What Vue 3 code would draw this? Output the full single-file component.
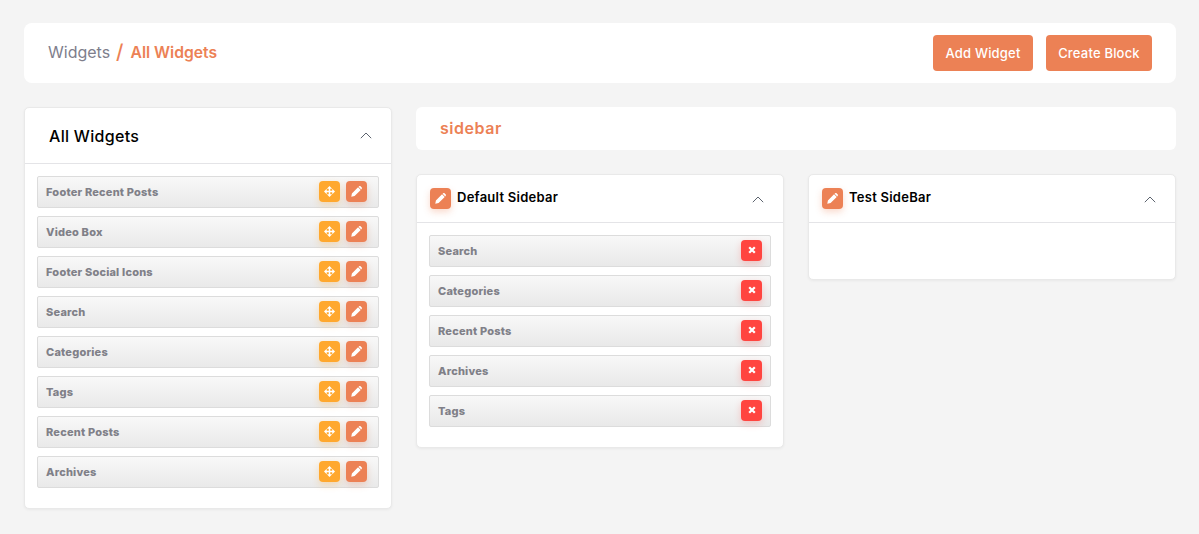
<template>
  <div class="page">
    <header class="top-bar">
      <div class="crumbs">
        <span class="crumb-muted">Widgets</span>
        <span class="crumb-sep">/</span>
        <span class="crumb-active">All Widgets</span>
      </div>
      <div class="top-actions">
        <button class="btn btn-add">Add Widget</button>
        <button class="btn btn-block">Create Block</button>
      </div>
    </header>

    <div class="columns">
      <section class="card all-card">
        <div class="all-head">
          <h2>All Widgets</h2>
          <svg class="chevron" viewBox="0 0 12 7" width="12" height="7"><path d="M.8 6.200 6 1l5.200 5.200" /></svg>
        </div>
        <div class="list all-list">
          <div v-for="name in allWidgets" :key="name" class="row">
            <span class="row-name">{{ name }}</span>
            <span class="icon-btn move">
              <svg viewBox="0 0 12 12" width="11" height="11"><path d="M6 0 8.900 3H6.800V5.200H9V3.100L12 6 9 8.900V6.800H6.800V9H8.900L6 12 3.100 9H5.200V6.800H3V8.900L0 6 3 3.100V5.200H5.200V3H3.100Z" /></svg>
            </span>
            <span class="icon-btn edit">
              <svg viewBox="0 0 12 12" width="11" height="11"><path d="M.3 11.700 1 8.100 7.700 1.400 10.600 4.300 3.900 11ZM8.300.8 8.900.3C9.400-.1 10-.1 10.400.3L11.700 1.600C12.100 2 12.100 2.600 11.700 3.100L11.200 3.700Z" /></svg>
            </span>
          </div>
        </div>
      </section>

      <div class="right">
        <div class="name-bar">sidebar</div>
        <div class="sidebars">
          <section v-for="bar in sidebars" :key="bar.title" class="card">
            <div class="bar-head">
              <span class="icon-btn edit">
                <svg viewBox="0 0 12 12" width="11" height="11"><path d="M.3 11.700 1 8.100 7.700 1.400 10.600 4.300 3.900 11ZM8.300.8 8.900.3C9.400-.1 10-.1 10.400.3L11.700 1.600C12.100 2 12.100 2.600 11.700 3.100L11.200 3.700Z" /></svg>
              </span>
              <h3>{{ bar.title }}</h3>
              <svg class="chevron" viewBox="0 0 12 7" width="12" height="7"><path d="M.8 6.200 6 1l5.200 5.200" /></svg>
            </div>
            <div class="list bar-list">
              <div v-for="item in bar.items" :key="item" class="row">
                <span class="row-name">{{ item }}</span>
                <span class="icon-btn remove">
                  <svg viewBox="0 0 10 10" width="8" height="8"><path d="M1.500 1.500 8.500 8.500M8.500 1.500 1.500 8.500" /></svg>
                </span>
              </div>
            </div>
          </section>
        </div>
      </div>
    </div>
  </div>
</template>

<script setup>
const allWidgets = [
  "Footer Recent Posts",
  "Video Box",
  "Footer Social Icons",
  "Search",
  "Categories",
  "Tags",
  "Recent Posts",
  "Archives",
];

const sidebars = [
  {
    title: "Default Sidebar",
    items: ["Search", "Categories", "Recent Posts", "Archives", "Tags"],
  },
  { title: "Test SideBar", items: [] },
];
</script>

<style>
html,
body {
  margin: 0;
  background: #f4f4f4;
}
</style>

<style scoped>
.page {
  box-sizing: border-box;
  height: 534px;
  overflow: hidden;
  padding: 23px 23px 0 24px;
  background: #f4f4f4;
  font-family: Inter, "Noto Sans", sans-serif;
}

.top-bar {
  display: flex;
  align-items: center;
  justify-content: space-between;
  height: 60px;
  padding: 0 24px;
  background: #fff;
  border-radius: 8px;
}

.crumbs {
  display: flex;
  align-items: center;
  padding-bottom: 2px;
  font-size: 16px;
}
.crumb-muted {
  color: #7e7e8c;
}
.crumb-sep {
  margin: 0 7px 0 6px;
  color: #ec8155;
  font-size: 20px;
  font-weight: 500;
}
.crumb-active {
  color: #ec8155;
  font-size: 15.7px;
  font-weight: 600;
}

.top-actions {
  display: flex;
  gap: 13px;
}
.btn {
  height: 36px;
  border: 0;
  border-radius: 4px;
  background: #ec8155;
  color: #fff;
  font-family: inherit;
  font-size: 13px;
  font-weight: 500;
  letter-spacing: 0.2px;
  padding: 0 0 1px;
}
.btn-add {
  width: 100px;
}
.btn-block {
  width: 106px;
}

.columns {
  display: flex;
  align-items: flex-start;
  gap: 24px;
  margin-top: 24px;
}

.card {
  background: #fff;
  border: 1px solid #e9e9e9;
  border-radius: 5px;
  box-shadow: 0 1px 3px rgba(0, 0, 0, 0.05);
}

.all-card {
  flex: 0 0 366px;
}
.all-head {
  display: flex;
  align-items: center;
  justify-content: space-between;
  box-sizing: border-box;
  height: 56px;
  padding: 0 19px 0 24px;
  border-bottom: 1px solid #e4e4e7;
}
.all-head h2 {
  margin: 0;
  color: #000;
  font-size: 16px;
  font-weight: 500;
  letter-spacing: 0.3px;
}

.chevron {
  fill: none;
  stroke: #5c636e;
  stroke-width: 1;
}

.list {
  display: flex;
  flex-direction: column;
  gap: 8px;
}
.all-list,
.bar-list {
  padding: 12px 12px 20px;
}
.bar-list {
  min-height: 24px;
}

.row {
  display: flex;
  align-items: center;
  gap: 6px;
  box-sizing: border-box;
  height: 32px;
  padding: 0 11px 0 8px;
  border: 1px solid #dcdcdc;
  border-radius: 2px;
  background: linear-gradient(to bottom, #f8f8f8, #e9e9e9);
}
.bar-list .row {
  padding-right: 8px;
}
.row-name {
  flex: 1;
  color: #808088;
  font-size: 11px;
  font-weight: 800;
  letter-spacing: 0.2px;
}

.icon-btn {
  display: flex;
  align-items: center;
  justify-content: center;
  flex: 0 0 21px;
  width: 21px;
  height: 21px;
  border-radius: 4px;
}
.row .icon-btn {
  margin-bottom: 2px;
}
.icon-btn svg {
  fill: #fff;
}
.move {
  background: #ffa82e;
  box-shadow: 0 3px 7px rgba(255, 168, 46, 0.3);
}
.edit {
  background: #ec8155;
  box-shadow: 0 3px 7px rgba(236, 129, 85, 0.3);
}
.remove {
  background: #ff4540;
  box-shadow: 0 3px 7px rgba(255, 69, 64, 0.25);
}
.remove svg {
  fill: none;
  stroke: #fff;
  stroke-width: 2.8;
}

.right {
  flex: 1;
  min-width: 0;
}
.name-bar {
  box-sizing: border-box;
  height: 43px;
  padding: 0 24px;
  border-radius: 6px;
  background: #fff;
  color: #ec8155;
  font-size: 16px;
  font-weight: 600;
  letter-spacing: 0.55px;
  line-height: 43px;
}
.sidebars {
  display: grid;
  grid-template-columns: 368px 368px;
  gap: 24px;
  align-items: start;
  margin-top: 24px;
}

.bar-head {
  display: flex;
  align-items: center;
  box-sizing: border-box;
  height: 48px;
  padding: 0 19px 0 13px;
  border-bottom: 1px solid #e4e4e7;
}
.bar-head h3 {
  flex: 1;
  margin: 0 0 3px 6px;
  color: #000;
  font-size: 13px;
  font-weight: 600;
  letter-spacing: 0.25px;
}
.bar-head .chevron {
  margin-top: 2px;
}
</style>
